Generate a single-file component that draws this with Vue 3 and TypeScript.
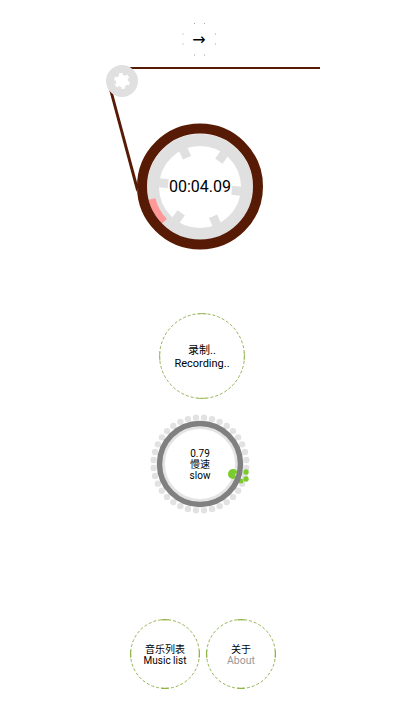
<script setup lang="ts">
function polar(cx: number, cy: number, r: number, deg: number) {
  const a = ((deg - 90) * Math.PI) / 180
  return { x: cx + r * Math.cos(a), y: cy + r * Math.sin(a) }
}
function arc(cx: number, cy: number, r: number, from: number, to: number) {
  const s = polar(cx, cy, r, from)
  const e = polar(cx, cy, r, to)
  return `M${s.x} ${s.y}A${r} ${r} 0 0 1 ${e.x} ${e.y}`
}
const notches = [36, 96, 156, 216, 276, 336]
const gearTeeth = [0, 60, 120, 180, 240, 300]
const pinkArc = arc(200, 187, 49.5, 226, 256)
const arrowDots = [
  [194.5, 23.5], [204.5, 23.5], [194.5, 55], [204.5, 55],
  [183, 34], [183, 44], [215.5, 34], [215.5, 44],
]
const speedDots = Array.from({ length: 36 }, (_, i) => polar(50, 50, 46.5, i * 10 + 5))
const quarterArcs = (size: number) => {
  const c = size / 2
  const r = c - 0.6
  return [0, 90, 180, 270].map((a) => arc(c, c, r, a - 6, a + 6))
}
const bigArcs = quarterArcs(86)
const smallArcs = quarterArcs(70)
</script>

<template>
  <main class="page">
    <section class="deck">
      <svg class="deck-art" width="400" height="270" viewBox="0 0 400 270">
        <circle v-for="(d, i) in arrowDots" :key="i" :cx="d[0]" :cy="d[1]" r="0.6" fill="#999" />
        <path d="M127 68H320" stroke="#571a05" stroke-width="2" />
        <path d="M106.5 80L136.5 192L138 186L110.5 84Z" fill="#571a05" />
        <circle cx="122" cy="81" r="12" fill="none" stroke="#e0e0e0" stroke-width="8" />
        <rect
          v-for="a in gearTeeth" :key="a" x="120.2" y="71.5" width="3.6" height="3.4" fill="#e0e0e0"
          :transform="`rotate(${a + 20} 122 81)`"
        />
        <circle cx="200" cy="187" r="47" fill="none" stroke="#e0e0e0" stroke-width="12" />
        <rect
          v-for="a in notches" :key="a" x="195.5" y="144" width="9" height="11" fill="#e0e0e0"
          :transform="`rotate(${a} 200 187)`"
        />
        <path :d="pinkArc" fill="none" stroke="#f99" stroke-width="7" />
        <circle cx="200" cy="186.5" r="58" fill="none" stroke="#571a05" stroke-width="10" />
      </svg>
      <button class="arrow">→</button>
      <div class="timer">00:04.09</div>
    </section>

    <button class="dash-btn record">
      <svg class="ring" width="86" height="86" viewBox="0 0 86 86">
        <circle cx="43" cy="43" r="42.4" fill="none" stroke="#7aa02c" stroke-width="0.8" stroke-dasharray="3 2" />
        <path v-for="(d, i) in bigArcs" :key="i" :d="d" fill="none" stroke="#9dbf5c" stroke-width="1" />
      </svg>
      <span>录制..</span>
      <span>Recording..</span>
    </button>

    <div class="speed">
      <svg class="ring" width="100" height="100" viewBox="0 0 100 100">
        <circle v-for="(p, i) in speedDots" :key="i" :cx="p.x" :cy="p.y" r="3.2" fill="#e2e2e2" />
        <circle cx="50" cy="50" r="36.5" fill="none" stroke="#e4e4e4" stroke-width="3" />
        <circle cx="83" cy="60" r="5" fill="#7ccb2e" />
        <circle cx="87" cy="61" r="1.7" fill="#fff" />
        <circle cx="96" cy="58" r="2.7" fill="#7ccb2e" />
        <circle cx="96" cy="65" r="2.7" fill="#7ccb2e" />
        <circle cx="91" cy="67" r="2.5" fill="#7ccb2e" />
        <circle cx="50" cy="50" r="40.5" fill="none" stroke="#808080" stroke-width="5.5" />
      </svg>
      <span>0.79</span>
      <span>慢速</span>
      <span>slow</span>
    </div>

    <nav class="bottom">
      <button class="dash-btn small">
        <svg class="ring" width="70" height="70" viewBox="0 0 70 70">
          <circle cx="35" cy="35" r="34.4" fill="none" stroke="#7aa02c" stroke-width="0.8" stroke-dasharray="3 2" />
          <path v-for="(d, i) in smallArcs" :key="i" :d="d" fill="none" stroke="#8fb545" stroke-width="1.2" />
        </svg>
        <span>音乐列表</span>
        <span class="strong">Music list</span>
      </button>
      <button class="dash-btn small">
        <svg class="ring" width="70" height="70" viewBox="0 0 70 70">
          <circle cx="35" cy="35" r="34.4" fill="none" stroke="#7aa02c" stroke-width="0.8" stroke-dasharray="3 2" />
          <path v-for="(d, i) in smallArcs" :key="i" :d="d" fill="none" stroke="#8fb545" stroke-width="1.2" />
        </svg>
        <span>关于</span>
        <span class="muted">About</span>
      </button>
    </nav>
  </main>
</template>

<style scoped>
.page {
  width: 400px;
  height: 711px;
  background: #fff;
  display: flex;
  flex-direction: column;
  align-items: center;
  font-family: Roboto, "Noto Sans CJK SC", sans-serif;
  color: #000;
  overflow: hidden;
}
.deck {
  position: relative;
  width: 400px;
  height: 270px;
  flex: none;
}
.deck-art {
  display: block;
}
.arrow {
  position: absolute;
  left: 184px;
  top: 25px;
  width: 30px;
  height: 30px;
  padding: 0;
  border: 0;
  background: none;
  font-family: "DejaVu Sans", sans-serif;
  font-size: 16px;
  line-height: 30px;
  color: #000;
}
.timer {
  position: absolute;
  left: 150px;
  top: 177px;
  width: 100px;
  text-align: center;
  font-size: 16px;
  line-height: 20px;
}
.dash-btn {
  position: relative;
  display: flex;
  flex-direction: column;
  align-items: center;
  justify-content: center;
  padding: 2px 0 0;
  border: 0;
  background: none;
  font-family: inherit;
  color: #000;
}
.ring {
  position: absolute;
  left: 0;
  top: 0;
}
.dash-btn span,
.speed span {
  position: relative;
}
.record {
  width: 86px;
  height: 86px;
  margin-top: 43px;
  margin-left: 4px;
  font-size: 11px;
  line-height: 13px;
}
.speed {
  position: relative;
  width: 100px;
  height: 100px;
  margin-top: 15px;
  display: flex;
  flex-direction: column;
  align-items: center;
  justify-content: center;
  font-size: 10px;
  line-height: 11px;
}
.bottom {
  display: flex;
  gap: 6px;
  margin-top: 105px;
  margin-left: 6px;
}
.small {
  width: 70px;
  height: 70px;
  font-size: 10px;
  line-height: 11px;
}
.strong {
  font-size: 10px;
}
.muted {
  font-size: 10.5px;
  color: #999;
}
</style>
